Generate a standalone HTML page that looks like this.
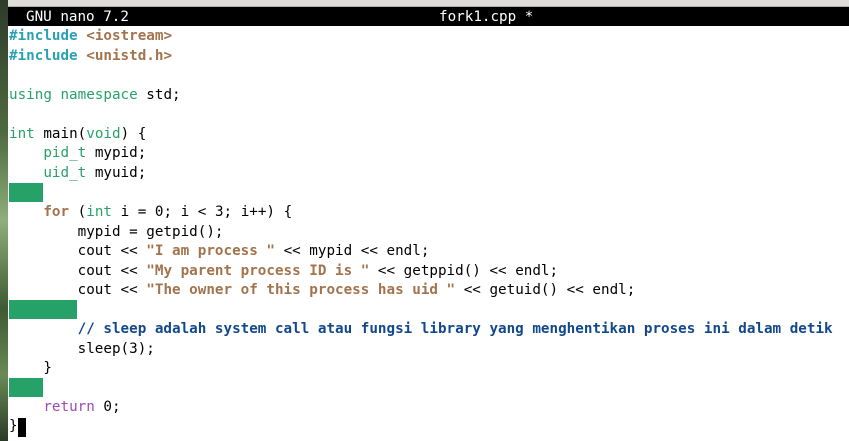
<!DOCTYPE html>
<html><head><meta charset="utf-8"><style>
html,body{margin:0;padding:0;width:849px;height:441px;overflow:hidden;background:#fff}
#frame{position:absolute;left:0;top:0;width:849px;height:7px;background:#deddda;border-bottom:1px solid #b0aeab;box-sizing:border-box}
#left{position:absolute;left:0;top:0;width:8px;height:441px;background:linear-gradient(180deg,#2d3a2a 0%,#4f6a3f 30%,#8fae7a 50%,#3e5a33 70%,#6a8a55 85%,#2b3a27 100%)}
#term{position:absolute;left:8px;top:7px;width:841px;height:434px;background:#fff}
#title{position:absolute;left:8px;top:7px;width:841px;height:19px;background:#000;color:#fff}
.t{position:absolute;top:2px;line-height:19px;font:14.25px "DejaVu Sans Mono","Liberation Mono",monospace;white-space:pre}
.l{position:absolute;left:9px;height:19.55px;line-height:19.55px;font:14.25px "DejaVu Sans Mono","Liberation Mono",monospace;white-space:pre;color:#000}
.inc{color:#2aa1b3;font-weight:bold}
.str{color:#a2734c;font-weight:bold}
.ty{color:#26a269}
.kw{color:#a2734c;font-weight:bold}
.rt{color:#a347ba}
.cm{color:#12488b;font-weight:bold}
.g{position:absolute;left:9px;height:19px;background:#26a269}
.cur{display:inline-block;width:8px;height:19px;background:#000;vertical-align:top}
</style></head><body>
<div id="frame"></div><div id="left"></div><div id="term"></div>
<div id="title"><span class="t" style="left:18px">GNU nano 7.2</span><span class="t" style="left:431px">fork1.cpp *</span></div>
<div class="l" style="top:28px"><span class="inc">#include</span> <span class="str">&lt;iostream&gt;</span></div>
<div class="l" style="top:48px"><span class="inc">#include</span> <span class="str">&lt;unistd.h&gt;</span></div>
<div class="l" style="top:87px"><span class="ty">using namespace</span> std;</div>
<div class="l" style="top:126px"><span class="ty">int</span> main(<span class="ty">void</span>) {</div>
<div class="l" style="top:145px">    <span class="ty">pid_t</span> mypid;</div>
<div class="l" style="top:165px">    <span class="ty">uid_t</span> myuid;</div>
<div class="g" style="top:183px;width:34px"></div>
<div class="l" style="top:204px">    <span class="kw">for</span> (<span class="ty">int</span> i = 0; i &lt; 3; i++) {</div>
<div class="l" style="top:224px">        mypid = getpid();</div>
<div class="l" style="top:243px">        cout &lt;&lt; <span class="str">"I am process "</span> &lt;&lt; mypid &lt;&lt; endl;</div>
<div class="l" style="top:263px">        cout &lt;&lt; <span class="str">"My parent process ID is "</span> &lt;&lt; getppid() &lt;&lt; endl;</div>
<div class="l" style="top:282px">        cout &lt;&lt; <span class="str">"The owner of this process has uid "</span> &lt;&lt; getuid() &lt;&lt; endl;</div>
<div class="g" style="top:300px;width:68px"></div>
<div class="l" style="top:321px">        <span class="cm">// sleep adalah system call atau fungsi library yang menghentikan proses ini dalam detik</span></div>
<div class="l" style="top:341px">        sleep(3);</div>
<div class="l" style="top:360px">    }</div>
<div class="g" style="top:378px;width:34px"></div>
<div class="l" style="top:399px">    <span class="rt">return</span> 0;</div>
<div class="l" style="top:418px">}<span class="cur"></span></div>
</body></html>
